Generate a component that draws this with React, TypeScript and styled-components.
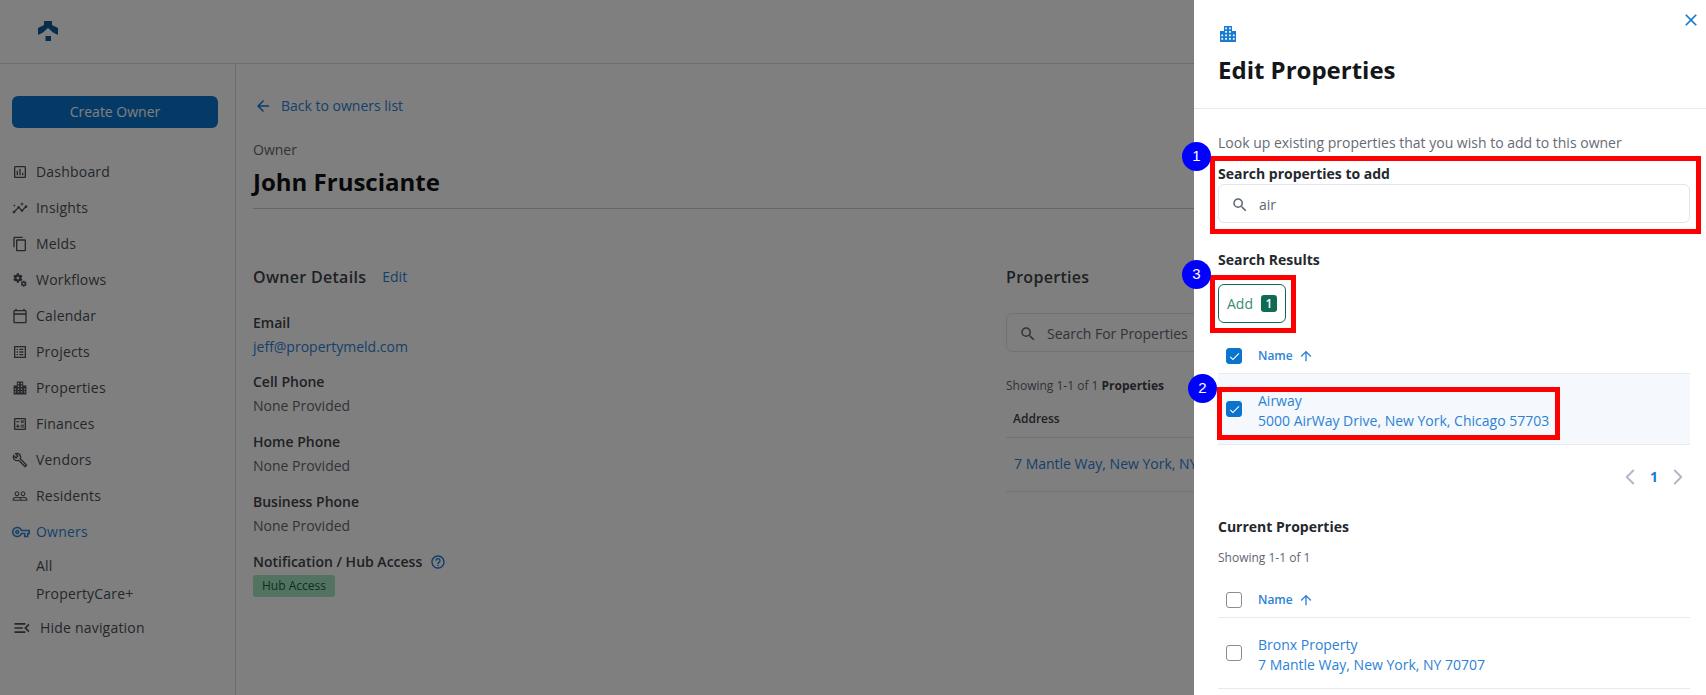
import React from "react";
import styled, { createGlobalStyle } from "styled-components";
import { ChevronLeft, ChevronRight } from "lucide-react";
import {
  MdOutlineAssessment,
  MdOutlineInsights,
  MdOutlineContentCopy,
  MdMiscellaneousServices,
  MdOutlineCalendarToday,
  MdOutlineListAlt,
  MdOutlineCalculate,
  MdPeopleOutline,
  MdOutlineVpnKey,
  MdOutlineMenuOpen,
  MdArrowBack,
  MdArrowUpward,
  MdSearch,
  MdClose,
  MdCheck,
  MdHelpOutline,
  MdOutlineBuild,
} from "react-icons/md";

const GlobalStyle = createGlobalStyle`
  html, body {
    margin: 0;
    height: 100%;
    overflow: hidden;
    background: #fff;
    font-family: "Open Sans", "Liberation Sans", sans-serif;
    font-size: 14px;
    line-height: 20px;
    color: #2b2f36;
  }
  * { box-sizing: border-box; }
`;

// building glyph used in the sidebar and in the drawer head
const BuildingIcon = ({ size, color, pad = 0 }: { size: number; color: string; pad?: number }) => (
  <svg width={size} height={size} viewBox={`${-pad} ${-pad} ${16 + pad * 2} ${16 + pad * 2}`} fill={color}>
    <path
      fillRule="evenodd"
      d="M4 0h8v5h4v11H0V5h4V0zM5.200 1.500v1.700h1.700V1.500H5.200zm3.900 0v1.700h1.700V1.500H9.100zM5.200 5v1.700h1.700V5H5.200zm3.900 0v1.700h1.700V5H9.100zM1.400 8.500v1.700h1.700V8.500H1.400zm3.800 0v1.700h1.700V8.500H5.200zm3.900 0v1.700h1.700V8.500H9.100zm3.800 0v1.700h1.700V8.500h-1.700zM1.400 12v1.700h1.700V12H1.400zm3.800 0v1.700h1.700V12H5.200zm3.900 0v1.700h1.700V12H9.100zm3.800 0v1.700h1.700V12h-1.700z"
    />
  </svg>
);

const Logo = () => (
  <svg width="20" height="20" viewBox="0 0 20 20" fill="#0f5a9c">
    <path d="M6 0h8v4l6 3v7l-5-2.500L10 7l-5 4.500L0 14V7l6-3V0z" />
    <path d="M7.500 15H13v5H7.500z" />
  </svg>
);

const Page = styled.div`
  display: flex;
  flex-direction: column;
  height: 695px;
  width: 1706px;
  overflow: hidden;
`;

const TopBar = styled.header`
  display: flex;
  align-items: center;
  flex: none;
  height: 64px;
  padding: 0 0 1px 38px;
  border-bottom: 1px solid #d8dade;
`;

const Body = styled.div`
  display: flex;
  flex: 1;
  min-height: 0;
`;

const Sidebar = styled.aside`
  flex: none;
  width: 236px;
  padding: 32px 17px 0 12px;
  border-right: 1px solid #d8dade;
`;

const CreateButton = styled.button`
  display: block;
  width: 206px;
  height: 32px;
  margin-bottom: 26px;
  border: 0;
  border-radius: 6px;
  background: #0a74ce;
  color: #fff;
  font: inherit;
`;

const NavItem = styled.div<{ $active?: boolean }>`
  display: flex;
  align-items: center;
  gap: ${(p) => (p.$active ? 6 : 8)}px;
  height: 36px;
  letter-spacing: 0.2px;
  color: ${(p) => (p.$active ? "#2c7fd4" : "#4a4f57")};

  svg {
    flex: none;
    width: ${(p) => (p.$active ? 18 : 16)}px;
    height: ${(p) => (p.$active ? 18 : 16)}px;
    color: ${(p) => (p.$active ? "#2c7fd4" : "#4a4f57")};
  }
`;

const SubNavGroup = styled.div`
  padding-top: 2px;
`;

const SubNav = styled.div`
  height: 28px;
  padding-left: 24px;
  line-height: 28px;
  letter-spacing: 0.2px;
  color: #4a4f57;
`;

const HideNav = styled.div`
  display: flex;
  align-items: center;
  gap: 8px;
  height: 36px;
  margin-top: 2px;
  letter-spacing: 0.2px;
  color: #4a4f57;

  svg {
    width: 20px;
    height: 20px;
  }
`;

const Main = styled.main`
  flex: 1;
  min-width: 0;
  padding: 32px 0 0 17px;
`;

const BackLink = styled.div`
  display: flex;
  align-items: center;
  gap: 9px;
  padding-left: 1px;
  color: #2c7fd4;
  svg {
    width: 18px;
    height: 18px;
    color: #1a78cc;
  }
`;

const Eyebrow = styled.div`
  margin-top: 24px;
  color: #63676e;
`;

const OwnerName = styled.h1`
  margin: 6px 0 0;
  padding-bottom: 10px;
  border-bottom: 1px solid #c9ccd6;
  font-size: 24px;
  line-height: 32px;
  font-weight: 700;
  color: #101114;
`;

const Columns = styled.div`
  display: grid;
  grid-template-columns: 753px 1fr;
  margin-top: 56px;
`;

const SectionHead = styled.div`
  display: flex;
  align-items: center;
  gap: 16px;
  height: 24px;
  font-size: 16px;
  font-weight: 600;
  letter-spacing: 0.3px;
  color: #3e4249;
`;

const EditLink = styled.span`
  font-size: 14px;
  font-weight: 400;
  letter-spacing: 0;
  color: #2c7fd4;
`;

const Fields = styled.div`
  display: flex;
  flex-direction: column;
  gap: 16px;
  margin-top: 24px;
`;

const Field = styled.div`
  display: flex;
  flex-direction: column;
  gap: 4px;
  &:first-child {
    margin-bottom: -1px;
  }
`;

const FieldLabel = styled.div`
  display: flex;
  align-items: center;
  gap: 8px;
  font-weight: 600;
  color: #3e4249;
  svg {
    width: 16px;
    height: 16px;
    color: #1a78cc;
  }
`;

const FieldValue = styled.div<{ $link?: boolean }>`
  color: ${(p) => (p.$link ? "#2c7fd4" : "#63676e")};
`;

const HubBadge = styled.span`
  align-self: flex-start;
  height: 22px;
  margin-top: -1px;
  padding: 0 9px;
  border-radius: 3px;
  background: #a6e5c0;
  font-size: 12px;
  line-height: 22px;
  color: #136240;
`;

const SearchBox = styled.div<{ $mt: number }>`
  display: flex;
  align-items: center;
  gap: 10px;
  height: 39px;
  margin-top: ${(p) => p.$mt}px;
  padding: 2px 12px 0;
  border: 1px solid #e2e4f0;
  border-radius: 6px;
  background: #fff;
  color: #5f6672;
  svg {
    flex: none;
    width: 18px;
    height: 18px;
    color: #5f6672;
  }
`;

const Showing = styled.div<{ $mt: number }>`
  margin-top: ${(p) => p.$mt}px;
  font-size: 12px;
  line-height: 16px;
  color: #5f6672;
  b {
    font-weight: 700;
    color: #3e4249;
  }
`;

const AddressHead = styled.div`
  height: 28px;
  margin-top: 16px;
  padding-left: 7px;
  border-bottom: 1px solid #e2e4ea;
  font-size: 12px;
  line-height: 18px;
  font-weight: 600;
  color: #3e4249;
`;

const AddressRow = styled.div`
  height: 54px;
  padding-left: 8px;
  border-bottom: 1px solid #e2e4ea;
  line-height: 51px;
  white-space: nowrap;
  color: #2c7fd4;
`;

const Overlay = styled.div`
  position: fixed;
  inset: 0;
  background: rgba(0, 0, 0, 0.5);
`;

const Drawer = styled.aside`
  position: fixed;
  top: 0;
  right: 0;
  bottom: 0;
  width: 512px;
  background: #fff;
  overflow: hidden;
`;

const DrawerHead = styled.div`
  height: 109px;
  padding: 26px 20px 0 26px;
  border-bottom: 1px solid #e8eaf0;
`;

const DrawerTitle = styled.h2`
  margin: 5px 0 0 -2px;
  font-size: 24px;
  line-height: 36px;
  font-weight: 700;
  color: #14161a;
`;

const CloseButton = styled.div`
  position: absolute;
  top: 10px;
  right: 5px;
  width: 20px;
  height: 20px;
  color: #1a7cd0;
  svg {
    display: block;
    width: 20px;
    height: 20px;
  }
`;

const DrawerBody = styled.div`
  padding: 24px 16px 0 24px;
`;

const Intro = styled.div`
  color: #666b74;
`;

const BoldLabel = styled.div<{ $mt: number }>`
  margin-top: ${(p) => p.$mt}px;
  font-weight: 700;
  color: #25282d;
`;

const AddButton = styled.button`
  display: flex;
  align-items: center;
  gap: 8px;
  width: 68px;
  height: 39px;
  margin-top: 14px;
  padding: 0 8px;
  border: 1px solid #0f6b54;
  border-radius: 6px;
  background: #fff;
  font: inherit;
  color: #3d8a76;
`;

const CountBadge = styled.span`
  width: 16px;
  height: 17px;
  border-radius: 3px;
  background: #0f6b54;
  color: #fff;
  font-size: 12px;
  font-weight: 600;
  line-height: 17px;
  text-align: center;
`;

const HeadRow = styled.div<{ $mt: number; $h: number }>`
  display: flex;
  align-items: center;
  gap: 16px;
  height: ${(p) => p.$h}px;
  margin-top: ${(p) => p.$mt}px;
  padding-left: 8px;
  border-bottom: 1px solid #e8eaf0;
`;

const SortLabel = styled.div`
  display: flex;
  align-items: center;
  gap: 5px;
  font-size: 12px;
  font-weight: 600;
  color: #2c82d6;
  svg {
    width: 16px;
    height: 16px;
  }
`;

const ResultRow = styled.div<{ $selected?: boolean; $h: number }>`
  display: flex;
  align-items: center;
  gap: 16px;
  height: ${(p) => p.$h}px;
  padding-left: 8px;
  border-bottom: 1px solid #e8eaf0;
  background: ${(p) => (p.$selected ? "#f5f8fc" : "#fff")};
`;

const RowText = styled.div`
  padding-top: 4px;
  color: #2c82d6;
`;

const Checkbox = styled.span<{ $on?: boolean }>`
  display: flex;
  align-items: center;
  justify-content: center;
  flex: none;
  width: 16px;
  height: 16px;
  border-radius: 3px;
  border: 1px solid ${(p) => (p.$on ? "#0a74ce" : "#8a8d92")};
  background: ${(p) => (p.$on ? "#0a74ce" : "#fff")};
  color: #fff;
  svg {
    width: 13px;
    height: 13px;
  }
`;

const Pager = styled.div`
  display: flex;
  align-items: center;
  justify-content: flex-end;
  gap: 7px;
  height: 26px;
  margin: 19px -1px 0 0;
  font-weight: 700;
  color: #1a7cd0;
  svg {
    width: 26px;
    height: 26px;
    color: #b0b8c8;
  }
`;

const RedBox = styled.div<{ $l: number; $t: number; $w: number; $h: number }>`
  position: absolute;
  left: ${(p) => p.$l}px;
  top: ${(p) => p.$t}px;
  width: ${(p) => p.$w}px;
  height: ${(p) => p.$h}px;
  border: 5px solid #ff0000;
`;

const StepDot = styled.div<{ $l: number; $t: number }>`
  position: fixed;
  left: ${(p) => p.$l}px;
  top: ${(p) => p.$t}px;
  width: 29px;
  height: 29px;
  border-radius: 50%;
  background: #0000ff;
  color: #fff;
  font-family: "Liberation Sans", sans-serif;
  font-size: 15px;
  line-height: 28px;
  text-align: center;
`;

const navItems = [
  { label: "Dashboard", icon: <MdOutlineAssessment /> },
  { label: "Insights", icon: <MdOutlineInsights /> },
  { label: "Melds", icon: <MdOutlineContentCopy /> },
  { label: "Workflows", icon: <MdMiscellaneousServices /> },
  { label: "Calendar", icon: <MdOutlineCalendarToday /> },
  { label: "Projects", icon: <MdOutlineListAlt /> },
  { label: "Properties", icon: <BuildingIcon size={16} color="#4a4f57" pad={2} /> },
  { label: "Finances", icon: <MdOutlineCalculate /> },
  { label: "Vendors", icon: <MdOutlineBuild /> },
  { label: "Residents", icon: <MdPeopleOutline /> },
];

export default function App() {
  return (
    <Page>
      <GlobalStyle />
      <TopBar>
        <Logo />
      </TopBar>
      <Body>
        <Sidebar>
          <CreateButton>Create Owner</CreateButton>
          {navItems.map((item) => (
            <NavItem key={item.label}>
              {item.icon}
              {item.label}
            </NavItem>
          ))}
          <NavItem $active>
            <MdOutlineVpnKey />
            Owners
          </NavItem>
          <SubNavGroup>
            <SubNav>All</SubNav>
            <SubNav>PropertyCare+</SubNav>
          </SubNavGroup>
          <HideNav>
            <MdOutlineMenuOpen />
            Hide navigation
          </HideNav>
        </Sidebar>
        <Main>
          <BackLink>
            <MdArrowBack />
            Back to owners list
          </BackLink>
          <Eyebrow>Owner</Eyebrow>
          <OwnerName>John Frusciante</OwnerName>
          <Columns>
            <div>
              <SectionHead>
                Owner Details <EditLink>Edit</EditLink>
              </SectionHead>
              <Fields>
                <Field>
                  <FieldLabel>Email</FieldLabel>
                  <FieldValue $link>jeff@propertymeld.com</FieldValue>
                </Field>
                <Field>
                  <FieldLabel>Cell Phone</FieldLabel>
                  <FieldValue>None Provided</FieldValue>
                </Field>
                <Field>
                  <FieldLabel>Home Phone</FieldLabel>
                  <FieldValue>None Provided</FieldValue>
                </Field>
                <Field>
                  <FieldLabel>Business Phone</FieldLabel>
                  <FieldValue>None Provided</FieldValue>
                </Field>
                <Field>
                  <FieldLabel>
                    Notification / Hub Access <MdHelpOutline />
                  </FieldLabel>
                  <HubBadge>Hub Access</HubBadge>
                </Field>
              </Fields>
            </div>
            <div>
              <SectionHead>Properties</SectionHead>
              <SearchBox $mt={24}>
                <MdSearch />
                Search For Properties
              </SearchBox>
              <Showing $mt={26}>
                Showing 1-1 of 1 <b>Properties</b>
              </Showing>
              <AddressHead>Address</AddressHead>
              <AddressRow>7 Mantle Way, New York, NY 70707</AddressRow>
            </div>
          </Columns>
        </Main>
      </Body>

      <Overlay />
      <Drawer>
        <DrawerHead>
          <BuildingIcon size={16} color="#1a7cd0" />
          <DrawerTitle>Edit Properties</DrawerTitle>
        </DrawerHead>
        <CloseButton>
          <MdClose />
        </CloseButton>
        <DrawerBody>
          <Intro>Look up existing properties that you wish to add to this owner</Intro>
          <BoldLabel $mt={11}>Search properties to add</BoldLabel>
          <SearchBox $mt={0}>
            <MdSearch />
            air
          </SearchBox>
          <BoldLabel $mt={27}>Search Results</BoldLabel>
          <AddButton>
            Add <CountBadge>1</CountBadge>
          </AddButton>
          <HeadRow $mt={16} $h={35}>
            <Checkbox $on>
              <MdCheck />
            </Checkbox>
            <SortLabel>
              Name <MdArrowUpward />
            </SortLabel>
          </HeadRow>
          <ResultRow $selected $h={71}>
            <Checkbox $on>
              <MdCheck />
            </Checkbox>
            <RowText>
              Airway
              <br />
              5000 AirWay Drive, New York, Chicago 57703
            </RowText>
          </ResultRow>
          <Pager>
            <ChevronLeft strokeWidth={1.75} />
            1
            <ChevronRight strokeWidth={1.75} />
          </Pager>
          <BoldLabel $mt={27}>Current Properties</BoldLabel>
          <Showing $mt={13}>Showing 1-1 of 1</Showing>
          <HeadRow $mt={16} $h={36}>
            <Checkbox />
            <SortLabel>
              Name <MdArrowUpward />
            </SortLabel>
          </HeadRow>
          <ResultRow $h={71}>
            <Checkbox />
            <RowText>
              Bronx Property
              <br />
              7 Mantle Way, New York, NY 70707
            </RowText>
          </ResultRow>
        </DrawerBody>
        <RedBox $l={16} $t={156} $w={491} $h={78} />
        <RedBox $l={16} $t={275} $w={86} $h={58} />
        <RedBox $l={23} $t={387} $w={343} $h={53} />
      </Drawer>
      <StepDot $l={1182} $t={142}>1</StepDot>
      <StepDot $l={1182} $t={260}>3</StepDot>
      <StepDot $l={1188} $t={374}>2</StepDot>
    </Page>
  );
}
